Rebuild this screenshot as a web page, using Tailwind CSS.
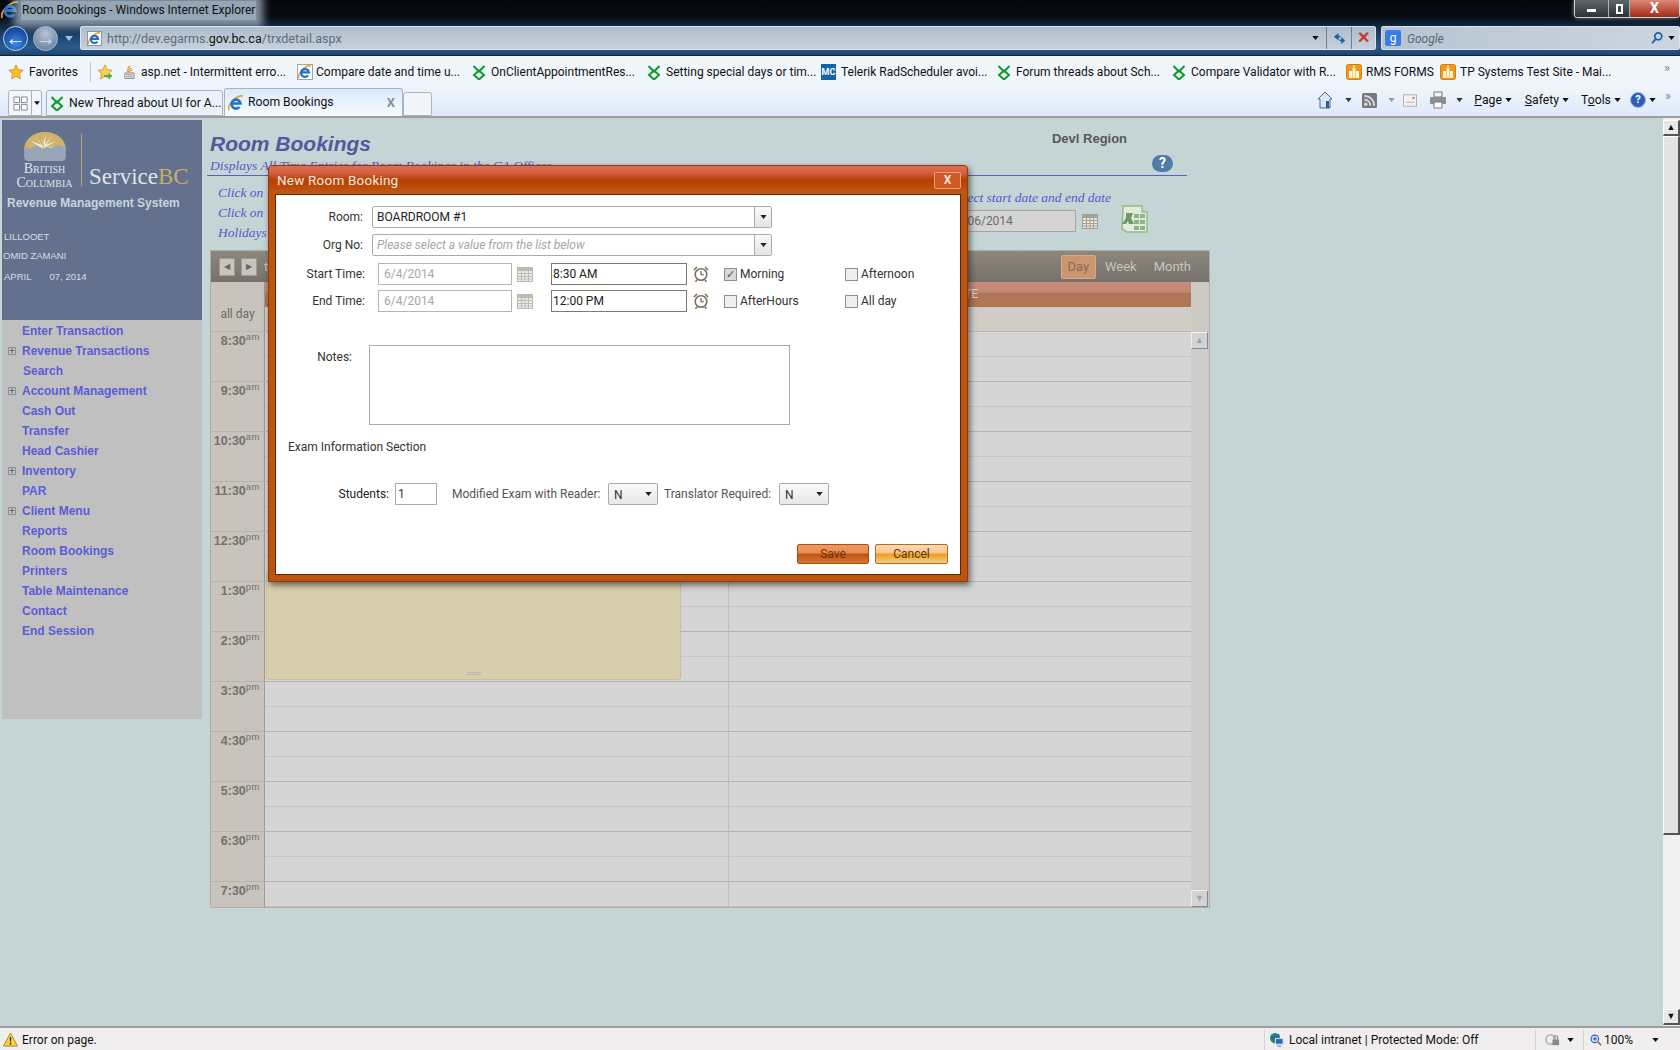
<!DOCTYPE html>
<html lang="en">
<head>
    <meta charset="UTF-8">
    <title>Room Bookings - Windows Internet Explorer</title>
    <script src="https://cdn.jsdelivr.net/npm/@tailwindcss/browser@4"></script>
</head>
<body class="w-[1680px] h-[1050px] overflow-hidden bg-[#c5d5d5] font-['Roboto',sans-serif] text-[12px] text-[#222]">
    <!-- Shared icons -->
    <svg class="hidden">
        <symbol id="ie" viewBox="0 0 16 16">
            <path d="M1 15C-1 10 8 0 15 1" fill="none" stroke="#e8a321" stroke-width="1.6"/>
            <path d="M3.5 8.5h9A4.5 4.5 0 1 0 11.5 12" fill="none" stroke="#2470c8" stroke-width="2.6"/>
        </symbol>
        <symbol id="telerik" viewBox="0 0 16 16">
            <path d="M2.500 2 8 7.500 13.500 2M8 6.500l-5 4.500 5 4.500 5-4.500z" fill="none" stroke="#0c9a2b" stroke-width="2"/>
        </symbol>
        <symbol id="rms" viewBox="0 0 16 16">
            <rect x=".5" y=".5" width="15" height="15" rx="2" fill="#f29a1f" stroke="#d77c10"/>
            <path d="M3 14V7h3v7zM10 14V7h3v7zM6.500 14V4h3v10z" fill="#fff4cc"/>
            <circle cx="8" cy="2.600" r="1" fill="#fff"/>
        </symbol>
        <symbol id="cal" viewBox="0 0 16 16">
            <rect x=".5" y="1.500" width="15" height="14" fill="#e9e6df" stroke="#a59f94"/>
            <rect x="1" y="2" width="14" height="3" fill="#a59f94"/>
            <path d="M1 7.500h14M1 10.500h14M1 13h14M4.500 5v10M8 5v10M11.500 5v10" stroke="#a59f94" stroke-width="1"/>
        </symbol>
        <symbol id="clock" viewBox="0 0 16 16">
            <circle cx="8" cy="8.500" r="5.800" fill="#fff" stroke="#7d6f5c" stroke-width="1.600"/>
            <path d="M8 5v3.700h2.800" fill="none" stroke="#7d6f5c" stroke-width="1.300"/>
            <path d="M1 4 4 1M15 4l-3-3M4 14l-1.500 1.800M12 14l1.500 1.800" stroke="#7d6f5c" stroke-width="1.600"/>
        </symbol>
        <symbol id="down" viewBox="0 0 8 5">
            <path d="M0 0h8L4 5z" fill="currentColor"/>
        </symbol>
    </svg>

    <div class="flex flex-col h-full">
        <!-- Title bar and address bar -->
        <header class="h-[56px] shrink-0 bg-[linear-gradient(180deg,#04060a_0%,#070b12_30%,#17395f_58%,#2a5b8c_85%,#1d4670_100%)] border-b border-[#0e2438]">
            <div class="h-[26px] flex items-start">
                <svg class="w-[18px] h-[18px] ml-[1px] mt-[1px] shrink-0"><use href="#ie"/></svg>
                <span class="ml-[2px] mt-[1px] h-[19px] leading-[19px] px-[1px] bg-[#b9cde0]/80 shadow-[0_0_8px_7px_rgba(185,205,224,.7)] text-[#111] text-[12px]">Room Bookings - Windows Internet Explorer</span>
                <div class="ml-auto h-[18px] w-[106px] flex rounded-b-[4px] border border-t-0 border-[#c9d3dc] overflow-hidden shadow-[0_0_4px_rgba(255,255,255,.5)]">
                    <div class="w-[33px] bg-[linear-gradient(180deg,#5e656d,#2c3238)] flex items-center justify-center"><span class="w-[9px] h-[3px] bg-white mt-[3px]"></span></div>
                    <div class="w-[22px] bg-[linear-gradient(180deg,#5e656d,#2c3238)] border-x border-[#aab2ba] flex items-center justify-center"><span class="w-[7px] h-[10px] border-2 border-white"></span></div>
                    <div class="flex-1 bg-[linear-gradient(180deg,#d98878,#a52a18)] text-white font-bold text-[14px] leading-[16px] text-center">X</div>
                </div>
            </div>
            <div class="h-[24px] flex items-center">
                <div class="w-[25px] h-[25px] ml-[3px] shrink-0 rounded-full bg-[radial-gradient(circle_at_50%_70%,#3a8ae8,#0a2c80)] border border-[#c5d2e0] flex items-center justify-center text-white font-bold text-[20px] leading-none">&#8592;</div>
                <div class="w-[25px] h-[25px] ml-[5px] shrink-0 rounded-full bg-[radial-gradient(circle_at_50%_30%,#b5c3d4,#5d7596)] border border-[#a9b8c8] flex items-center justify-center text-[#d8e0ea] font-bold text-[20px] leading-none">&#8594;</div>
                <svg class="w-[8px] h-[5px] ml-[7px] text-[#9fc0e0]"><use href="#down"/></svg>
                <div class="ml-[7px] w-[1296px] h-[24px] flex items-center bg-[linear-gradient(180deg,#aebccc,#c7d1dc)] border border-[#dbe4ee] rounded-[2px]">
                    <svg class="w-[15px] h-[15px] ml-[6px] shrink-0 bg-white border border-[#8897a8]"><use href="#ie"/></svg>
                    <span class="ml-[5px] mt-[2px] text-[#5e6c7a] text-[12.500px]">http://dev.egarms.<span class="text-[#111]">gov.bc.ca</span>/trxdetail.aspx</span>
                    <svg class="w-[7px] h-[4px] ml-auto mr-[7px] text-[#111]"><use href="#down"/></svg>
                    <div class="w-[25px] h-full border-l border-[#6f7f90] flex items-center justify-center">
                        <svg viewBox="0 0 16 16" class="w-[15px] h-[15px]"><path d="M7 2 2 6l5 4V7h2V5H7zM10 14l4-4-4-4v3H8v2h2z" fill="#1d5fae"/></svg>
                    </div>
                    <div class="w-[24px] h-full border-l border-[#6f7f90] flex items-center justify-center text-[#c0392b] font-bold text-[16px] leading-none">&#10005;</div>
                </div>
                <div class="ml-[5px] flex-1 h-[24px] flex items-center bg-[linear-gradient(90deg,#b7c4d2,#ccd5df)] border border-[#dbe4ee] rounded-[2px]">
                    <span class="w-[16px] h-[16px] ml-[3px] rounded-[2px] bg-[#3b7de0] text-white text-[12px] leading-[16px] text-center">g</span>
                    <span class="ml-[6px] mt-[2px] italic text-[#5b6875]">Google</span>
                    <svg viewBox="0 0 16 16" class="ml-auto w-[14px] h-[14px] mr-[4px]"><circle cx="9.500" cy="6" r="4" fill="none" stroke="#1d5fae" stroke-width="2"/><path d="M6.500 9 2.500 14" stroke="#1d5fae" stroke-width="2.200"/></svg>
                    <svg class="w-[7px] h-[4px] mr-[4px] text-[#111]"><use href="#down"/></svg>
                </div>
            </div>
        </header>

        <!-- Favorites bar -->
        <div class="h-[32px] shrink-0 flex items-center bg-[#f1f6fd] text-[12px] text-[#111] whitespace-nowrap">
            <svg viewBox="0 0 16 16" class="w-[16px] h-[16px] ml-[8px] shrink-0"><path d="m8 .8 2.200 4.800 5 .6-3.700 3.500 1 5.200L8 12.300 3.500 14.900l1-5.200L.8 6.200l5-.6z" fill="#f7bd2c" stroke="#c98a12" stroke-width=".7"/></svg>
            <span class="ml-[5px] w-[61px]">Favorites</span>
            <span class="w-px h-[20px] bg-[#b9c3cf]"></span>
            <svg viewBox="0 0 16 16" class="w-[16px] h-[16px] ml-[6px] shrink-0"><path d="m8 .8 2.200 4.800 5 .6-3.700 3.500 1 5.200L8 12.300 3.500 14.900l1-5.200L.8 6.200l5-.6z" fill="#f7cf52" stroke="#c98a12" stroke-width=".7"/><path d="M7 11h5V9l3.500 3-3.500 3v-2H7z" fill="#49b04a"/></svg>
            <svg viewBox="0 0 14 16" class="w-[13px] h-[16px] ml-[10px] shrink-0"><path d="M2 9h10v6H2z" fill="#e8e8e8" stroke="#888"/><path d="M3.500 11h7M3.500 13h7" stroke="#999"/><path d="M4 8 10 6M4 6l5-2M5 3.500 8 1.500" stroke="#e8891a" stroke-width="1.300"/></svg>
            <span class="ml-[5px] w-[156px]">asp.net - Intermittent erro...</span>
            <svg class="w-[16px] h-[16px] shrink-0 bg-white border border-[#9aa5b1]"><use href="#ie"/></svg>
            <span class="ml-[3px] w-[155px]">Compare date and time u...</span>
            <svg class="w-[16px] h-[16px] shrink-0"><use href="#telerik"/></svg>
            <span class="ml-[4px] w-[155px]">OnClientAppointmentRes...</span>
            <svg class="w-[16px] h-[16px] shrink-0"><use href="#telerik"/></svg>
            <span class="ml-[4px] w-[155px]">Setting special days or tim...</span>
            <span class="w-[15px] h-[16px] shrink-0 bg-[#1364a8] text-white text-[9px] font-bold leading-[16px] text-center">MC</span>
            <span class="ml-[5px] w-[155px]">Telerik RadScheduler avoi...</span>
            <svg class="w-[16px] h-[16px] shrink-0"><use href="#telerik"/></svg>
            <span class="ml-[4px] w-[155px]">Forum threads about Sch...</span>
            <svg class="w-[16px] h-[16px] shrink-0"><use href="#telerik"/></svg>
            <span class="ml-[4px] w-[155px]">Compare Validator with R...</span>
            <svg class="w-[16px] h-[16px] shrink-0"><use href="#rms"/></svg>
            <span class="ml-[4px] w-[74px]">RMS FORMS</span>
            <svg class="w-[16px] h-[16px] shrink-0"><use href="#rms"/></svg>
            <span class="ml-[4px] w-[204px]">TP Systems Test Site - Mai...</span>
            <span class="text-[#6a86a8] text-[13px] -mt-[8px]">&raquo;</span>
        </div>

        <!-- Tabs and command bar -->
        <div class="h-[30px] shrink-0 flex items-end bg-[linear-gradient(180deg,#eef4fc,#dfeafa)] border-b-2 border-[#9c9c9c] text-[12.200px] text-[#111] whitespace-nowrap">
            <div class="ml-[8px] h-[26px] w-[34px] flex bg-[#f2f6fb] border border-[#a9b4c2] rounded-t-[3px]">
                <div class="w-[23px] border-r border-[#a9b4c2] flex items-center justify-center">
                    <svg viewBox="0 0 16 16" class="w-[15px] h-[15px]"><path d="M1 1h6v6H1zM9 1h6v6H9zM1 9h6v6H1zM9 9h6v6H9z" fill="#fff" stroke="#7d8794"/></svg>
                </div>
                <svg class="w-[6px] h-[4px] m-auto text-[#111]"><use href="#down"/></svg>
            </div>
            <div class="ml-[4px] h-[26px] w-[177px] flex items-center bg-[#eaf1fa] border border-[#a9b4c2] rounded-t-[3px]">
                <svg class="w-[16px] h-[16px] ml-[2px] shrink-0"><use href="#telerik"/></svg>
                <span class="ml-[4px]">New Thread about UI for A...</span>
            </div>
            <div class="ml-[1px] h-[28px] w-[179px] flex items-center bg-[linear-gradient(180deg,#d9e9fa,#f7fbff)] border border-b-0 border-[#a9b4c2] rounded-t-[3px]">
                <svg class="w-[16px] h-[16px] ml-[3px] shrink-0"><use href="#ie"/></svg>
                <span class="ml-[4px]">Room Bookings</span>
                <span class="ml-auto mr-[7px] font-bold text-[#8b9096] text-[13px]">X</span>
            </div>
            <div class="h-[24px] w-[29px] bg-[#f2f6fb] border border-[#a9b4c2] rounded-t-[3px]"></div>
            <div class="ml-auto h-[26px] mb-[3px] flex items-center">
                <svg viewBox="0 0 16 18" class="w-[16px] h-[18px]"><path d="M8 1 1 8h2v9h10V8h2z" fill="#dfe7f0" stroke="#4c6a8c"/><path d="M9 10h3v7H9z" fill="#2e5c94"/></svg>
                <svg class="w-[7px] h-[4px] ml-[12px] text-[#333]"><use href="#down"/></svg>
                <svg viewBox="0 0 16 16" class="w-[15px] h-[17px] ml-[10px]"><rect width="16" height="16" rx="2" fill="#77797c"/><circle cx="4" cy="12" r="1.800" fill="#ddd"/><path d="M2.500 7a6.500 6.500 0 0 1 6.500 6.500M2.500 3A10.500 10.500 0 0 1 13 13.500" fill="none" stroke="#ddd" stroke-width="1.800"/></svg>
                <svg class="w-[7px] h-[4px] ml-[11px] text-[#999]"><use href="#down"/></svg>
                <svg viewBox="0 0 16 14" class="w-[14px] h-[13px] ml-[8px]"><rect x=".5" y=".5" width="15" height="13" fill="#f3f3f3" stroke="#a9a9a9"/><path d="M3 9h10" stroke="#aaa"/><path d="M11 3h2v2h-2z" fill="#d0453a"/></svg>
                <svg viewBox="0 0 18 18" class="w-[18px] h-[18px] ml-[12px]"><path d="M5 1h8v5H5z" fill="#f4f4f4" stroke="#777"/><rect x="1" y="6" width="16" height="7" rx="1" fill="#8b8f94"/><path d="M5 11h8v6H5z" fill="#fff" stroke="#777"/></svg>
                <svg class="w-[7px] h-[4px] ml-[9px] text-[#333]"><use href="#down"/></svg>
                <span class="ml-[11px]"><u>P</u>age</span>
                <svg class="w-[7px] h-[4px] ml-[3px] text-[#111]"><use href="#down"/></svg>
                <span class="ml-[13px]"><u>S</u>afety</span>
                <svg class="w-[7px] h-[4px] ml-[3px] text-[#111]"><use href="#down"/></svg>
                <span class="ml-[12px]">T<u>o</u>ols</span>
                <svg class="w-[7px] h-[4px] ml-[3px] text-[#111]"><use href="#down"/></svg>
                <span class="ml-[9px] w-[16px] h-[16px] rounded-full bg-[#2d5fb8] border border-[#9db3d8] text-white text-[11px] font-bold leading-[14px] text-center">?</span>
                <svg class="w-[7px] h-[4px] ml-[3px] text-[#111]"><use href="#down"/></svg>
                <span class="ml-[9px] mr-[9px] mb-[8px] text-[#6a86a8] text-[13px]">&raquo;</span>
            </div>
        </div>

        <!-- Page area -->
        <div class="relative flex-1 min-h-0 flex border-b-2 border-[#9c9c9c]">
            <!-- Sidebar -->
            <aside class="w-[200px] ml-[2px] mt-[2px] shrink-0 self-start font-['Liberation_Sans',Arial,sans-serif]">
                <div class="h-[200px] bg-[#63718f] text-[#d6dde0]">
                    <div class="h-[72px] flex">
                        <div class="w-[66px] ml-[9px] mt-[12px]">
                            <svg viewBox="0 0 46 32" class="w-[46px] h-[29px] ml-[11px]">
                                <path d="M0 19A23 19 0 0 1 46 19z" fill="#d0b26a"/>
                                <path d="M23 18 12 5l7 9-12-4 11 7-15 0h36l-14-1 10-6-11 4 7-9-8 8 1-11-3 11-3-11z" fill="#f0ebd9"/>
                                <path d="M0 17l8 1 6-3 7 4 4-3 5 2 8-4 8 3v10q0 5-5 5H5q-5 0-5-5z" fill="#9aa6b7"/>
                            </svg>
                            <div class="font-['Liberation_Serif',serif] text-[#dfe4e8] text-[14px] leading-[14px] text-center [font-variant:small-caps] ml-[1px] mt-[1px]">British<br>Columbia</div>
                        </div>
                        <div class="ml-[4px] mt-[14px] w-px h-[52px] bg-[#b4a579]"></div>
                        <div class="ml-[7px] mt-[43px] font-['Liberation_Serif',serif] text-[23px] leading-[28px] text-[#dfe4e8] whitespace-nowrap">Service<span class="text-[#c9ad6b]">BC</span></div>
                    </div>
                    <div class="mt-[4px] ml-[5px] font-bold text-[12px] leading-[14px] text-[#c7d5da]">Revenue Management System</div>
                    <div class="mt-[21px] ml-[2px] text-[9.500px] leading-[12px]">LILLOOET</div>
                    <div class="mt-[7px] ml-[1px] text-[9.500px] leading-[12px]">OMID ZAMANI</div>
                    <div class="mt-[9px] ml-[2px] text-[9.500px] leading-[12px] whitespace-pre">APRIL       07, 2014</div>
                </div>
                <nav class="h-[399px] pt-px bg-[#c0c0c0] font-bold text-[12px] text-[#5a5dd6]">
                    <a class="h-5 flex items-center pl-[20px]">Enter Transaction</a>
                    <a class="h-5 flex items-center"><span class="ml-[6px] mr-[6px] w-[8px] h-[8px] border border-[#8a8f9a] text-[#666] text-[9px] leading-[6px] text-center">+</span>Revenue Transactions</a>
                    <a class="h-5 flex items-center pl-[21px]">Search</a>
                    <a class="h-5 flex items-center"><span class="ml-[6px] mr-[6px] w-[8px] h-[8px] border border-[#8a8f9a] text-[#666] text-[9px] leading-[6px] text-center">+</span>Account Management</a>
                    <a class="h-5 flex items-center pl-[20px]">Cash Out</a>
                    <a class="h-5 flex items-center pl-[20px]">Transfer</a>
                    <a class="h-5 flex items-center pl-[20px]">Head Cashier</a>
                    <a class="h-5 flex items-center"><span class="ml-[6px] mr-[6px] w-[8px] h-[8px] border border-[#8a8f9a] text-[#666] text-[9px] leading-[6px] text-center">+</span>Inventory</a>
                    <a class="h-5 flex items-center pl-[20px]">PAR</a>
                    <a class="h-5 flex items-center"><span class="ml-[6px] mr-[6px] w-[8px] h-[8px] border border-[#8a8f9a] text-[#666] text-[9px] leading-[6px] text-center">+</span>Client Menu</a>
                    <a class="h-5 flex items-center pl-[20px]">Reports</a>
                    <a class="h-5 flex items-center pl-[20px]">Room Bookings</a>
                    <a class="h-5 flex items-center pl-[20px]">Printers</a>
                    <a class="h-5 flex items-center pl-[20px]">Table Maintenance</a>
                    <a class="h-5 flex items-center pl-[20px]">Contact</a>
                    <a class="h-5 flex items-center pl-[20px]">End Session</a>
                </nav>
            </aside>

            <!-- Main content -->
            <main class="w-[1008px] shrink-0 pl-[5px]">
                <!-- Heading -->
                <div class="h-[58px] w-[980px] flex justify-between border-b border-[#5a5dc8]">
                    <div class="pl-[3px]">
                        <h1 class="mt-[14px] font-['Liberation_Sans',Arial,sans-serif] font-bold italic text-[21px] leading-[24px] text-[#55589c]">Room Bookings</h1>
                        <p class="mt-[2px] font-['Liberation_Serif',serif] italic text-[13.500px] leading-[16px] text-[#5558c8]">Displays All Time Entries for Room Bookings in the CA Offices</p>
                    </div>
                    <div class="w-[197px] relative">
                        <div class="mt-[13px] ml-[2px] text-center font-['Liberation_Sans',Arial,sans-serif] font-bold text-[13px] leading-[16px] text-[#55585c]">Devl Region</div>
                        <span class="absolute left-[162px] top-[37px] w-[21px] h-[17px] rounded-full bg-[#4f7ba6] text-white font-bold text-[14px] leading-[17px] text-center">?</span>
                    </div>
                </div>
                <!-- Instructions and date range -->
                <div class="h-[74px] w-[1000px] ml-[3px] flex justify-between">
                    <div class="pt-[7px] pl-[8px] font-['Liberation_Serif',serif] italic text-[13.500px] leading-[20px] text-[#5558d0]">
                        <p>Click on</p>
                        <p>Click on</p>
                        <p>Holidays</p>
                    </div>
                    <div class="flex flex-col items-end mr-[62px]">
                        <p class="mt-[14px] mr-[37px] font-['Liberation_Serif',serif] italic text-[13.500px] leading-[16px] text-[#5558d0]">Select start date and end date</p>
                        <div class="mt-[3px] flex items-center">
                            <div class="w-[130px] h-[22px] border border-[#a8a49c] bg-[#d5d5d5] text-[#6b6b6b] leading-[20px] pl-[2px]">04/06/2014</div>
                            <svg class="w-[16px] h-[16px] ml-[6px]"><use href="#cal"/></svg>
                            <svg viewBox="0 0 28 28" class="w-[28px] h-[28px] ml-[22px] -mt-[4px]">
                                <path d="M3 1h19v6h5v20H7l-5-3z" fill="#e4ebdd" stroke="#8fbd85" stroke-width="1.500"/>
                                <path d="M14 9h5v4h-5zM20 9h5v4h-5zM14 15h5v4h-5zM20 15h5v4h-5zM14 21h5v4h-5zM20 21h5v4h-5z" fill="#8fb38a"/>
                                <path d="M6 8h7l-2 5 3 6H9l-1-3-2 3H2l4-6z" fill="#6c9a62"/>
                            </svg>
                        </div>
                    </div>
                </div>
                <!-- Scheduler -->
                <section class="w-[1000px] ml-[3px] h-[658px] flex flex-col border border-[#b0aca6] bg-[#c8c3bc]">
                    <div class="h-[31px] shrink-0 flex items-center bg-[linear-gradient(180deg,#8d887e,#76716a)] text-[#c9c5bd] text-[13px]">
                        <span class="ml-[8px] w-[16px] h-[18px] border border-[#a09b92] bg-[#c9c5bd] flex items-center justify-center text-[#66625c] text-[8px]">&#9664;</span>
                        <span class="ml-[6px] w-[16px] h-[18px] border border-[#a09b92] bg-[#c9c5bd] flex items-center justify-center text-[#66625c] text-[8px]">&#9654;</span>
                        <span class="ml-[7px]">today</span>
                        <span class="ml-auto w-[35px] h-[24px] rounded-[2px] border border-[#d6a88c] bg-[#c99671] text-[#8f6a58] leading-[22px] text-center">Day</span>
                        <span class="ml-[9px]">Week</span>
                        <span class="ml-[17px] mr-[18px]">Month</span>
                    </div>
                    <div class="flex-1 min-h-0 flex">
                        <div class="w-[980px] shrink-0 flex flex-col overflow-hidden">
                            <div class="h-[25px] shrink-0 flex">
                                <div class="w-[54px] border-r border-[#a09a92]"></div>
                                <div class="flex-1 flex bg-[linear-gradient(180deg,#c98b7a_0%,#c08a74_40%,#af7555_45%,#af7555_100%)] text-[#e8d5c8] leading-[25px] text-center">
                                    <div class="w-[463px]">LILLOOET</div>
                                    <div class="flex-1">ROUTE</div>
                                </div>
                            </div>
                            <div class="h-[25px] shrink-0 flex bg-[#d0cdc7] border-b border-[#b8b4ae]">
                                <div class="w-[54px] bg-[#c8c3bc] border-r border-[#a09a92] text-[#6f6a64] text-center leading-[14px]">all day</div>
                            </div>
                            <div class="relative flex-1 min-h-0 font-['Liberation_Sans',Arial,sans-serif]">
                                <div class="flex h-[50px] border-b border-[#b8b2ac]"><div class="w-[54px] border-r border-[#a09a92] text-right pr-[4px] pt-[1px] text-[#76706a] font-bold text-[12.500px] leading-[16px]">8:30<sup class="font-normal text-[9.500px] tracking-[.5px]">am</sup></div><div class="flex-1 bg-[#d5d5d5]"><div class="h-[25px] border-b border-[#cac4bc]"></div></div></div>
                                <div class="flex h-[50px] border-b border-[#b8b2ac]"><div class="w-[54px] border-r border-[#a09a92] text-right pr-[4px] pt-[1px] text-[#76706a] font-bold text-[12.500px] leading-[16px]">9:30<sup class="font-normal text-[9.500px] tracking-[.5px]">am</sup></div><div class="flex-1 bg-[#d5d5d5]"><div class="h-[25px] border-b border-[#cac4bc]"></div></div></div>
                                <div class="flex h-[50px] border-b border-[#b8b2ac]"><div class="w-[54px] border-r border-[#a09a92] text-right pr-[4px] pt-[1px] text-[#76706a] font-bold text-[12.500px] leading-[16px]">10:30<sup class="font-normal text-[9.500px] tracking-[.5px]">am</sup></div><div class="flex-1 bg-[#d5d5d5]"><div class="h-[25px] border-b border-[#cac4bc]"></div></div></div>
                                <div class="flex h-[50px] border-b border-[#b8b2ac]"><div class="w-[54px] border-r border-[#a09a92] text-right pr-[4px] pt-[1px] text-[#76706a] font-bold text-[12.500px] leading-[16px]">11:30<sup class="font-normal text-[9.500px] tracking-[.5px]">am</sup></div><div class="flex-1 bg-[#d5d5d5]"><div class="h-[25px] border-b border-[#cac4bc]"></div></div></div>
                                <div class="flex h-[50px] border-b border-[#b8b2ac]"><div class="w-[54px] border-r border-[#a09a92] text-right pr-[4px] pt-[1px] text-[#76706a] font-bold text-[12.500px] leading-[16px]">12:30<sup class="font-normal text-[9.500px] tracking-[.5px]">pm</sup></div><div class="flex-1 bg-[#d5d5d5]"><div class="h-[25px] border-b border-[#cac4bc]"></div></div></div>
                                <div class="flex h-[50px] border-b border-[#b8b2ac]"><div class="w-[54px] border-r border-[#a09a92] text-right pr-[4px] pt-[1px] text-[#76706a] font-bold text-[12.500px] leading-[16px]">1:30<sup class="font-normal text-[9.500px] tracking-[.5px]">pm</sup></div><div class="flex-1 bg-[#d5d5d5]"><div class="h-[25px] border-b border-[#cac4bc]"></div></div></div>
                                <div class="flex h-[50px] border-b border-[#b8b2ac]"><div class="w-[54px] border-r border-[#a09a92] text-right pr-[4px] pt-[1px] text-[#76706a] font-bold text-[12.500px] leading-[16px]">2:30<sup class="font-normal text-[9.500px] tracking-[.5px]">pm</sup></div><div class="flex-1 bg-[#d5d5d5]"><div class="h-[25px] border-b border-[#cac4bc]"></div></div></div>
                                <div class="flex h-[50px] border-b border-[#b8b2ac]"><div class="w-[54px] border-r border-[#a09a92] text-right pr-[4px] pt-[1px] text-[#76706a] font-bold text-[12.500px] leading-[16px]">3:30<sup class="font-normal text-[9.500px] tracking-[.5px]">pm</sup></div><div class="flex-1 bg-[#d5d5d5]"><div class="h-[25px] border-b border-[#cac4bc]"></div></div></div>
                                <div class="flex h-[50px] border-b border-[#b8b2ac]"><div class="w-[54px] border-r border-[#a09a92] text-right pr-[4px] pt-[1px] text-[#76706a] font-bold text-[12.500px] leading-[16px]">4:30<sup class="font-normal text-[9.500px] tracking-[.5px]">pm</sup></div><div class="flex-1 bg-[#d5d5d5]"><div class="h-[25px] border-b border-[#cac4bc]"></div></div></div>
                                <div class="flex h-[50px] border-b border-[#b8b2ac]"><div class="w-[54px] border-r border-[#a09a92] text-right pr-[4px] pt-[1px] text-[#76706a] font-bold text-[12.500px] leading-[16px]">5:30<sup class="font-normal text-[9.500px] tracking-[.5px]">pm</sup></div><div class="flex-1 bg-[#d5d5d5]"><div class="h-[25px] border-b border-[#cac4bc]"></div></div></div>
                                <div class="flex h-[50px] border-b border-[#b8b2ac]"><div class="w-[54px] border-r border-[#a09a92] text-right pr-[4px] pt-[1px] text-[#76706a] font-bold text-[12.500px] leading-[16px]">6:30<sup class="font-normal text-[9.500px] tracking-[.5px]">pm</sup></div><div class="flex-1 bg-[#d5d5d5]"><div class="h-[25px] border-b border-[#cac4bc]"></div></div></div>
                                <div class="flex h-[50px] border-b border-[#b8b2ac]"><div class="w-[54px] border-r border-[#a09a92] text-right pr-[4px] pt-[1px] text-[#76706a] font-bold text-[12.500px] leading-[16px]">7:30<sup class="font-normal text-[9.500px] tracking-[.5px]">pm</sup></div><div class="flex-1 bg-[#d5d5d5]"><div class="h-[25px] border-b border-[#cac4bc]"></div></div></div>
                                <!-- column divider and booked block -->
                                <div class="absolute left-[517px] top-0 bottom-0 w-px bg-[#c2bcb5]"></div>
                                <div class="absolute left-[55px] top-[238px] w-[415px] h-[110px] rounded-[3px] bg-[#d6ceac] border border-[#c8bf95] flex items-end justify-center pb-[4px]">
                                    <span class="w-[14px] h-[3px] border-y border-[#bdb9a8]"></span>
                                </div>
                            </div>
                        </div>
                        <!-- Scheduler scrollbar -->
                        <div class="flex-1 flex flex-col bg-[#cdcac4] pt-[50px]">
                            <div class="flex-1 bg-[#cdcdcd] flex flex-col justify-between">
                                <span class="w-[17px] h-[17px] bg-[#d3d3d3] border border-[#eee] border-r-[#888] border-b-[#888] text-[#a3a3a3] text-[9px] leading-[15px] text-center">&#9650;</span>
                                <span class="w-[17px] h-[17px] bg-[#d3d3d3] border border-[#eee] border-r-[#888] border-b-[#888] text-[#a3a3a3] text-[9px] leading-[15px] text-center">&#9660;</span>
                            </div>
                        </div>
                    </div>
                </section>
            </main>

            <!-- Window scrollbar -->
            <div class="ml-auto w-[17px] flex flex-col bg-[#f0f0f0]">
                <div class="h-[16px] mt-[2px] bg-[#e8e8e8] border border-[#fff] border-r-2 border-r-[#555] border-b-2 border-b-[#555] text-[#111] text-[9px] leading-[13px] text-center">&#9650;</div>
                <div class="h-[699px] bg-[#e4e4e4] border border-[#fff] border-r-2 border-r-[#555] border-b-2 border-b-[#555]"></div>
                <div class="mt-auto mb-[1px] h-[16px] bg-[#e8e8e8] border border-[#fff] border-r-2 border-r-[#555] border-b-2 border-b-[#555] text-[#111] text-[9px] leading-[13px] text-center">&#9660;</div>
            </div>

            <!-- New Room Booking dialog -->
            <div class="absolute left-[268px] top-[47px] w-[700px] h-[417px] flex flex-col rounded-t-[4px] bg-[#bd5412] border border-[#8e3a0a] shadow-[2px_3px_6px_rgba(40,30,20,.65)]">
                <div class="h-[28px] shrink-0 flex items-center rounded-t-[3px] bg-[linear-gradient(180deg,#dc6c54_0%,#d26042_25%,#b83f00_50%,#c05a16_100%)]">
                    <span class="ml-[8px] text-[#f6e9e0] text-[13.500px] tracking-[.2px]">New Room Booking</span>
                    <span class="ml-auto mr-[6px] w-[27px] h-[17px] rounded-[2px] border border-[#f0a078] bg-[#cf5a26] text-[#f5e6da] font-bold text-[12px] leading-[15px] text-center">X</span>
                </div>
                <div class="flex-1 mx-[6px] mb-[6px] bg-white border border-[#5a2606] text-[#333]">
                    <div class="mt-[11px] flex items-center h-[22px]">
                        <label class="w-[87px] text-right">Room:</label>
                        <div class="ml-[9px] w-[400px] h-[22px] flex items-center border border-[#aaa] rounded-[2px]">
                            <span class="ml-[4px] flex-1 text-[#222]">BOARDROOM #1</span>
                            <span class="w-[17px] h-full border-l border-[#aaa] bg-[linear-gradient(180deg,#fafafa,#e4e4e4)] flex items-center justify-center"><svg class="w-[7px] h-[4px] text-[#222]"><use href="#down"/></svg></span>
                        </div>
                    </div>
                    <div class="mt-[6px] flex items-center h-[22px]">
                        <label class="w-[87px] text-right">Org No:</label>
                        <div class="ml-[9px] w-[400px] h-[22px] flex items-center border border-[#aaa] rounded-[2px]">
                            <span class="ml-[4px] flex-1 italic text-[#a6a6a6]">Please select a value from the list below</span>
                            <span class="w-[17px] h-full border-l border-[#aaa] bg-[linear-gradient(180deg,#fafafa,#e4e4e4)] flex items-center justify-center"><svg class="w-[7px] h-[4px] text-[#222]"><use href="#down"/></svg></span>
                        </div>
                    </div>
                    <div class="mt-[7px] flex items-center h-[22px]">
                        <label class="w-[89px] text-right">Start Time:</label>
                        <div class="ml-[13px] w-[134px] h-[22px] border border-[#b5b5b5] pl-[5px] leading-[20px] text-[#a6a6a6]">6/4/2014</div>
                        <svg class="ml-[5px] w-[16px] h-[16px] opacity-70"><use href="#cal"/></svg>
                        <div class="ml-[18px] w-[136px] h-[22px] border border-[#85786a] pl-[1px] leading-[20px] text-[#222]">8:30 AM</div>
                        <svg class="ml-[6px] w-[16px] h-[16px]"><use href="#clock"/></svg>
                        <span class="ml-[15px] w-[13px] h-[13px] border border-[#8f8f8f] bg-[#d9d9d9] text-[#555] text-[11px] leading-[11px] text-center">&#10003;</span>
                        <span class="ml-[3px] w-[105px]">Morning</span>
                        <span class="w-[13px] h-[13px] border border-[#8f8f8f] bg-[#eee]"></span>
                        <span class="ml-[3px]">Afternoon</span>
                    </div>
                    <div class="mt-[5px] flex items-center h-[22px]">
                        <label class="w-[89px] text-right">End Time:</label>
                        <div class="ml-[13px] w-[134px] h-[22px] border border-[#b5b5b5] pl-[5px] leading-[20px] text-[#a6a6a6]">6/4/2014</div>
                        <svg class="ml-[5px] w-[16px] h-[16px] opacity-70"><use href="#cal"/></svg>
                        <div class="ml-[18px] w-[136px] h-[22px] border border-[#85786a] pl-[1px] leading-[20px] text-[#222]">12:00 PM</div>
                        <svg class="ml-[6px] w-[16px] h-[16px]"><use href="#clock"/></svg>
                        <span class="ml-[15px] w-[13px] h-[13px] border border-[#8f8f8f] bg-[#eee]"></span>
                        <span class="ml-[3px] w-[105px]">AfterHours</span>
                        <span class="w-[13px] h-[13px] border border-[#8f8f8f] bg-[#eee]"></span>
                        <span class="ml-[3px]">All day</span>
                    </div>
                    <div class="mt-[33px] flex items-start">
                        <label class="w-[76px] text-right mt-[3px]">Notes:</label>
                        <div class="ml-[17px] w-[421px] h-[80px] border border-[#aaa]"></div>
                    </div>
                    <p class="mt-[14px] ml-[12px] leading-[16px]">Exam Information Section</p>
                    <div class="mt-[28px] flex items-center h-[22px]">
                        <label class="w-[113px] text-right text-[#222]">Students:</label>
                        <div class="ml-[6px] w-[42px] h-[22px] border border-[#aaa] pl-[2px] leading-[20px]">1</div>
                        <span class="ml-[15px] w-[156px] text-[#555]">Modified Exam with Reader:</span>
                        <div class="w-[50px] h-[22px] flex items-center justify-between px-[5px] border border-[#aaa] rounded-[2px] bg-[linear-gradient(180deg,#fafafa,#e8e8e8)]"><span class="mt-[2px]">N</span><svg class="w-[7px] h-[4px] text-[#222]"><use href="#down"/></svg></div>
                        <span class="ml-[6px] w-[115px] text-[#555]">Translator Required:</span>
                        <div class="w-[50px] h-[22px] flex items-center justify-between px-[5px] border border-[#aaa] rounded-[2px] bg-[linear-gradient(180deg,#fafafa,#e8e8e8)]"><span class="mt-[2px]">N</span><svg class="w-[7px] h-[4px] text-[#222]"><use href="#down"/></svg></div>
                    </div>
                    <div class="mt-[39px] mr-[12px] flex justify-end gap-[6px]">
                        <button class="w-[72px] h-[20px] rounded-[2px] border border-[#a4521c] bg-[linear-gradient(180deg,#ee9a63_0%,#e88c50_45%,#c05010_50%,#d87830_100%)] text-[#6a3208] leading-[18px]">Save</button>
                        <button class="w-[73px] h-[20px] rounded-[2px] border border-[#b06a2a] bg-[linear-gradient(180deg,#fcd8b0_0%,#fac690_45%,#eba012_50%,#f8cc90_100%)] text-[#5a3408] leading-[18px]">Cancel</button>
                    </div>
                </div>
            </div>
        </div>

        <!-- Status bar -->
        <footer class="h-[22px] shrink-0 pt-px flex items-center bg-[#f0eeee] text-[12px] text-[#111] whitespace-nowrap">
            <svg viewBox="0 0 16 16" class="w-[15px] h-[15px] ml-[3px]"><path d="M8 1 15.500 15H.5z" fill="#f7d33c" stroke="#a58a1e"/><path d="M7.200 5.500h1.600l-.3 5h-1zM7.200 11.500h1.600v1.800H7.200z" fill="#222"/></svg>
            <span class="ml-[4px] w-[1242px]">Error on page.</span>
            <span class="w-px h-full bg-[#d5d3d3]"></span>
            <svg viewBox="0 0 16 16" class="w-[15px] h-[15px] ml-[4px]"><circle cx="6.500" cy="6.500" r="5.500" fill="#2e8b57"/><path d="M2 4h5l-1 4H3zM8 2h3v3H8z" fill="#2767c2"/><rect x="7" y="7" width="8" height="6" fill="#2767c2" stroke="#dfe8f5"/><path d="M9 15h4" stroke="#666"/></svg>
            <span class="ml-[5px] w-[246px]">Local intranet | Protected Mode: Off</span>
            <span class="w-px h-full bg-[#d5d3d3]"></span>
            <svg viewBox="0 0 16 16" class="w-[15px] h-[15px] ml-[9px]"><circle cx="6" cy="8" r="5" fill="none" stroke="#bbb" stroke-width="2"/><rect x="8" y="8" width="7" height="6" fill="#888"/><path d="M9.500 8V6a2 2 0 0 1 4 0v2" fill="none" stroke="#888" stroke-width="1.300"/></svg>
            <svg class="w-[7px] h-[4px] ml-[7px] text-[#111]"><use href="#down"/></svg>
            <span class="ml-[9px] w-px h-full bg-[#d5d3d3]"></span>
            <svg viewBox="0 0 16 16" class="w-[12px] h-[12px] ml-[6px]"><circle cx="6.500" cy="6.500" r="5" fill="#cfe0f5" stroke="#2b66b5" stroke-width="1.500"/><path d="M4 6.500h5M6.500 4v5" stroke="#2b66b5" stroke-width="1.500"/><path d="m10.500 10.500 4.500 4.500" stroke="#9a6b3f" stroke-width="2"/></svg>
            <span class="ml-[2px]">100%</span>
            <svg class="w-[7px] h-[4px] ml-[19px] text-[#111]"><use href="#down"/></svg>
        </footer>
    </div>
</body>
</html>
